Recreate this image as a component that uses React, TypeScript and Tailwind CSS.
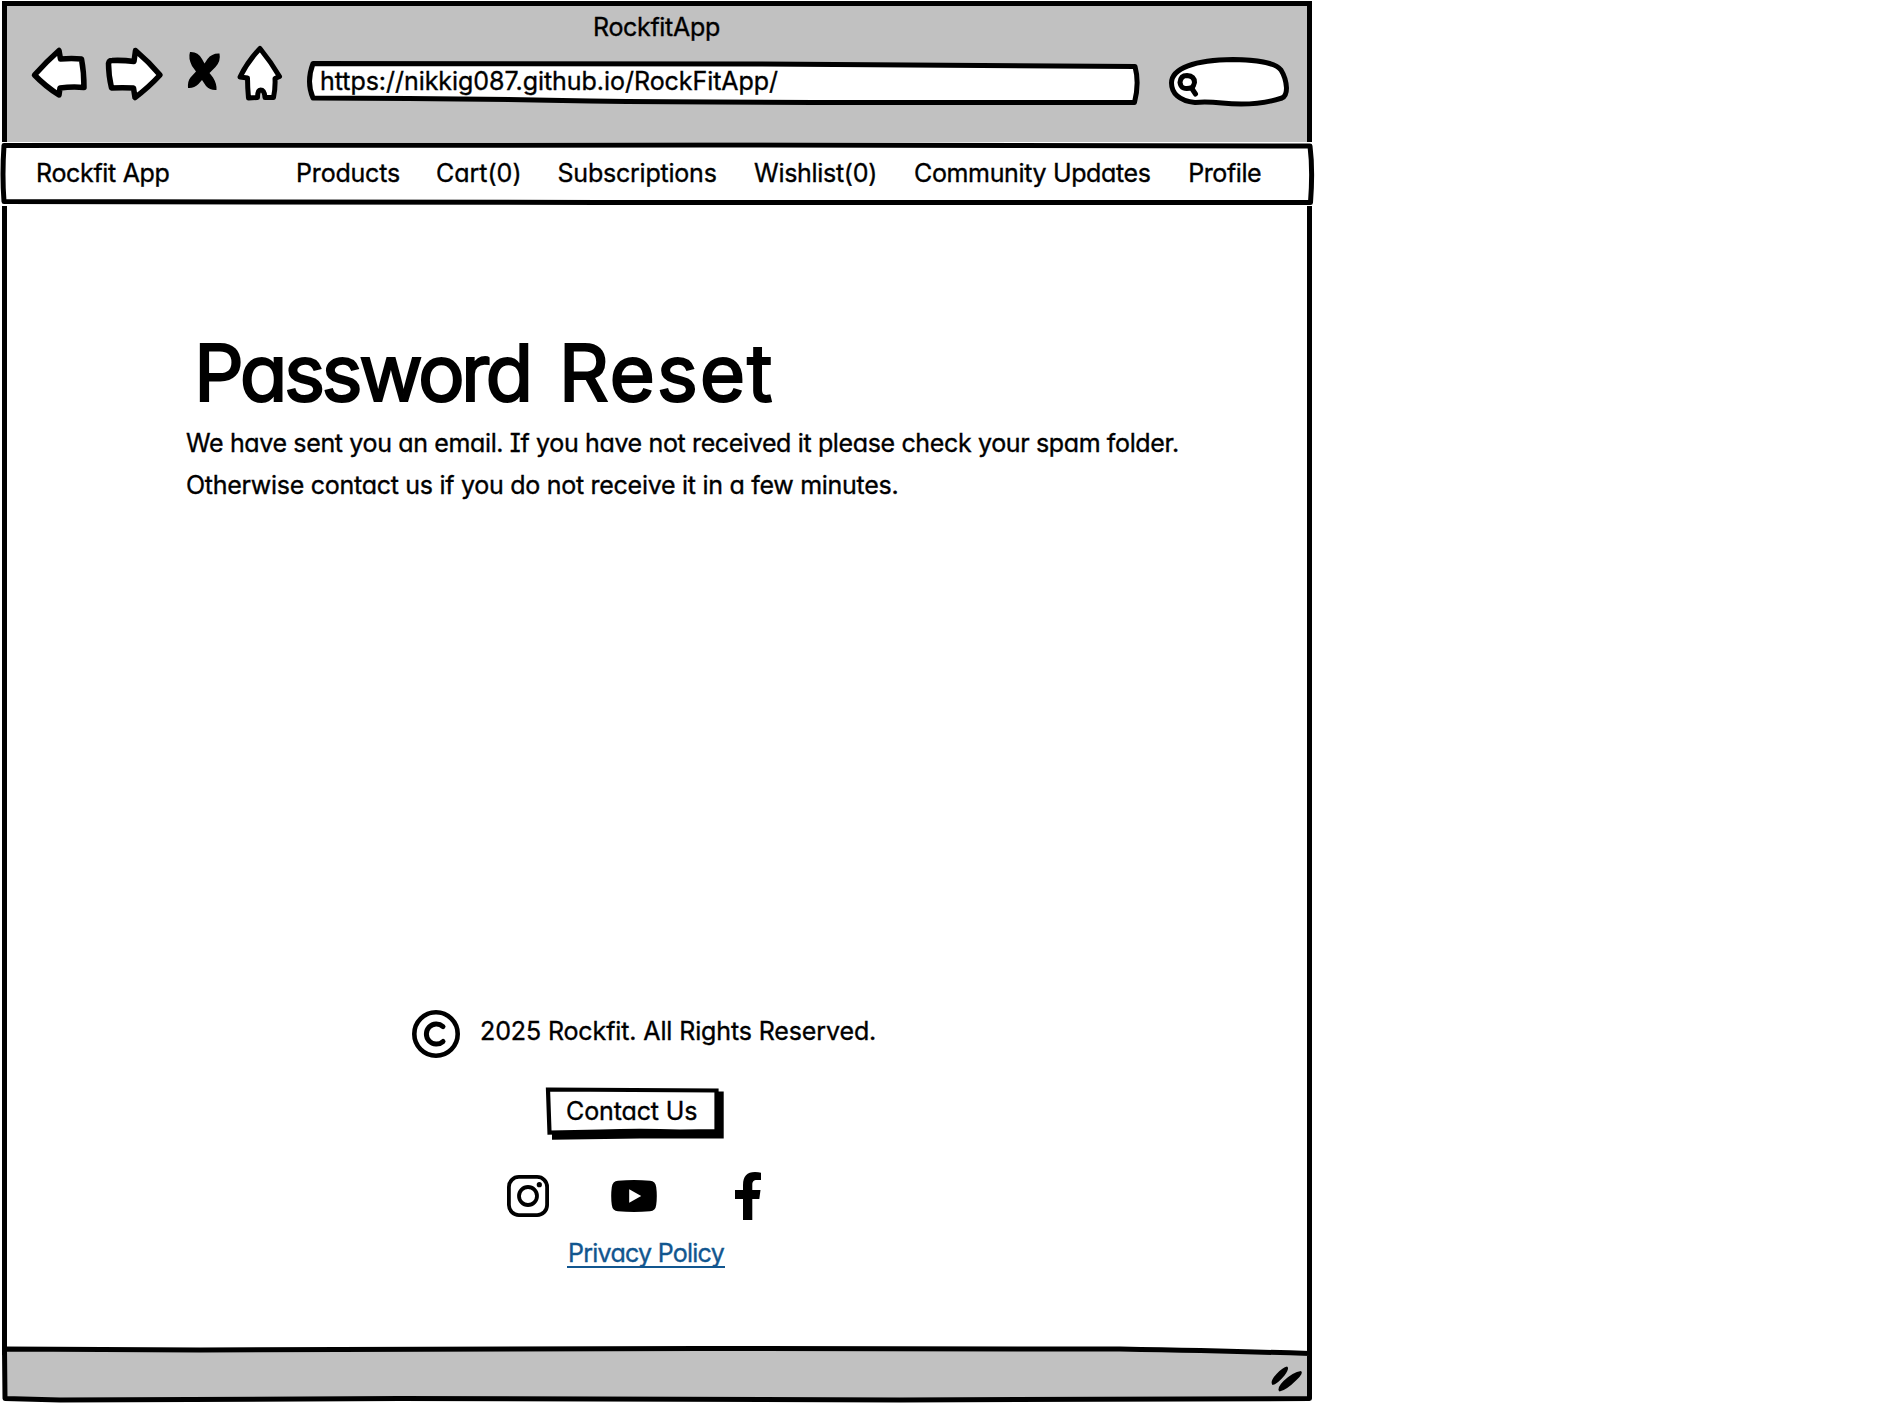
const ink = {
  fill: "none",
  stroke: "#000",
  strokeWidth: 5,
  strokeLinejoin: "round" as const,
  strokeLinecap: "round" as const,
};

const overlay = "pointer-events-none absolute left-0 top-0 overflow-visible";

function BackIcon() {
  return (
    <svg width="60" height="60" viewBox="28 44 60 60" className="block">
      <path d="M34.500 75Q46 62 59 50.500L60.500 59Q72 58 81.500 59Q84 72 84 87.500Q72 86.500 60 88L59 95Q45 86 34.500 75Z" {...ink} strokeWidth={5.500} fill="#fff" />
    </svg>
  );
}

function ForwardIcon() {
  return (
    <svg width="62" height="60" viewBox="102 44 62 60" className="block">
      <path d="M112 60.500Q123 60 134 61.500L135.500 50.500Q149 62 160 75Q148 88 135 97.500L133.500 88Q122 87.500 111.500 88Q108.500 75 108.500 63.500Q109 60.500 112 60.500Z" {...ink} strokeWidth={5.500} fill="#fff" />
    </svg>
  );
}

function StopIcon() {
  return (
    <svg width="36" height="44" viewBox="186 50 36 44" className="block">
      <path d="M190 52Q198 51.500 202 59L204.500 63.500L207.500 59Q212 53 219.500 53.500Q221 61 215.500 67L209.500 73L213 77.500Q217 84 216.500 90Q210 90.500 206 86L202 80L198.500 84Q194 88.500 188 88Q187.500 81 190.500 77.500L196 71.500L192 66Q188 58 190 52Z" />
    </svg>
  );
}

function HomeIcon() {
  return (
    <svg width="50" height="60" viewBox="235 44 50 60" className="block">
      <path d="M260 48.500Q271 62 279.500 76.500L275 78.500Q275.500 88 273.500 97.500L265 97.500Q264.500 90 260.500 90Q257.500 90 257.500 97.500L248.500 98Q247.500 87 247.500 78L240 77Q248 61 260 48.500Z" {...ink} fill="#fff" />
    </svg>
  );
}

function CopyrightIcon() {
  return (
    <svg width="48" height="48" viewBox="0 0 48 48" className="block">
      <circle cx="24" cy="24" r="21.700" {...ink} strokeWidth={4.600} />
      <path d="M31 16.500A10 10 0 1 0 31 31.500" {...ink} />
    </svg>
  );
}

function InstagramIcon() {
  return (
    <svg width="42" height="42" viewBox="0 0 42 42" className="block">
      <rect x="1.900" y="1.900" width="38.200" height="38.200" rx="10" {...ink} strokeWidth={3.800} />
      <circle cx="21" cy="21" r="9" {...ink} strokeWidth={3.800} />
      <circle cx="32.300" cy="9.700" r="2.600" />
    </svg>
  );
}

function YoutubeIcon() {
  return (
    <svg width="46" height="32" viewBox="0 0 46 32" className="block">
      <path d="M7 .7Q23-.6 39 .7Q44.500 1.200 45.200 7Q46.400 16 45.200 25Q44.500 30.800 39 31.300Q23 32.600 7 31.300Q1.500 30.800 .8 25Q-.4 16 .8 7Q1.500 1.200 7 .7Z" />
      <path d="M18.200 9.200L30.200 16L18.200 22.800Z" fill="#fff" />
    </svg>
  );
}

function FacebookIcon() {
  return (
    <svg width="26" height="48" viewBox="0 0 26 48" className="block">
      <path d="M8 48V27H0V18H8V13C8 4 12 0 20 0Q23.500 0 26 .8V8H22C18.500 8 17.300 9.500 17.300 13V18H25.500L24.300 27H17.300V48Z" />
    </svg>
  );
}

function AddressBar() {
  return (
    <div className="relative ml-[22px] flex h-[48px] w-[832px] items-start">
      <svg className={overlay} width="832" height="48" viewBox="307 60 832 48">
        <path d="M313 63.500Q560 63 760 64L1135 66.500Q1139.500 83 1134.500 102.500Q760 103 590 101Q440 98 313 98Q306 82 313 63.500Z" {...ink} fill="#fff" />
      </svg>
      <span className="relative ml-[13px] mt-[6px] tracking-[-0.04px]">https://nikkig087.github.io/RockFitApp/</span>
    </div>
  );
}

function SearchBox() {
  return (
    <div className="relative ml-[30px] h-[52px] w-[120px]">
      <svg className={overlay} width="120" height="52" viewBox="1169 56 120 52">
        <path d="M1195 102.500C1179 101 1171.500 93 1171.500 83C1171.500 68 1195 60 1233 59.500C1256 60 1275 62 1281 70Q1286 78 1286.500 88Q1286.500 96 1282 98C1262 104.500 1240 105 1222 103Q1206 101.500 1195 102.500Z" {...ink} fill="#fff" />
        <path d="M1192.500 87.500Q1181 91 1180 82.500Q1180.500 75.500 1187 75.500Q1194.500 76 1194.500 82.500Q1194 86 1191.500 88L1195.500 94" {...ink} />
      </svg>
    </div>
  );
}

function BrowserHeader() {
  return (
    <header className="ml-[2px] mt-px h-[141px] w-[1310px] border-x-5 border-t-5 border-black bg-[#c1c1c1]">
      <div className="pl-[586px] pt-[6px] tracking-[-0.32px]">RockfitApp</div>
      <div className="-mt-[2px] flex items-start pl-[21px]">
        <div className="mt-[4px]">
          <BackIcon />
        </div>
        <div className="ml-[14px] mt-[4px]">
          <ForwardIcon />
        </div>
        <div className="ml-[22px] mt-[10px]">
          <StopIcon />
        </div>
        <div className="ml-[13px] mt-[4px]">
          <HomeIcon />
        </div>
        <div className="mt-[20px]">
          <AddressBar />
        </div>
        <div className="mt-[16px]">
          <SearchBox />
        </div>
      </div>
    </header>
  );
}

function NavBar() {
  return (
    <nav className="relative mt-px flex h-[62px] w-[1314px] items-start pl-[36px] pt-[15px]">
      <svg className={overlay} width="1314" height="62" viewBox="0 143 1314 62">
        <path d="M4 145.500L700 145L1310 146Q1313 170 1310.500 202.500L600 202.500L4 201.500Q2 175 4 145.500Z" {...ink} />
      </svg>
      <a className="tracking-[-0.32px]">Rockfit App</a>
      <a className="ml-[126.500px] tracking-[-0.2px]">Products</a>
      <a className="ml-[36px]">Cart(0)</a>
      <a className="ml-[36px] tracking-[-0.22px]">Subscriptions</a>
      <a className="ml-[37.500px] tracking-[-0.3px]">Wishlist(0)</a>
      <a className="ml-[37px] tracking-[-0.35px]">Community Updates</a>
      <a className="ml-[37.500px] tracking-[-0.4px]">Profile</a>
    </nav>
  );
}

function ContactButton() {
  return (
    <button className="relative flex h-[51px] w-[178px] items-start pl-[20px] pt-[8px]">
      <svg className={overlay} width="178" height="51" viewBox="546 1088 178 51">
        <path d="M552 1091.500L723.700 1091.500L723.700 1138.500L640 1138.600L552 1139.800Z" />
        <path d="M548 1089.500L716.500 1090.500L716.500 1131L680 1131.500Q640 1130 600 1131.500L549.500 1132.500Z" {...ink} strokeWidth={4.200} strokeLinejoin="miter" fill="#fff" />
      </svg>
      <span className="relative tracking-[-0.12px]">Contact Us</span>
    </button>
  );
}

function PageBody() {
  return (
    <main className="ml-[2px] mt-px h-[1149px] w-[1310px] border-x-5 border-black">
      <h1 className="pl-[187px] pt-[120px] text-[78px] leading-[94px] [-webkit-text-stroke:2px]">
        <span className="tracking-[-3.6px]">Password</span> <span className="ml-[7px] tracking-[1.8px]">Reset</span>
      </h1>
      <p className="pl-[179px] pt-[8px] tracking-[-0.36px]">
        We have sent you an email. If you have not received it please check your spam folder.
      </p>
      <p className="pl-[179px] pt-[12px] tracking-[-0.28px]">
        Otherwise contact us if you do not receive it in a few minutes.
      </p>
      <footer className="pt-[510px]">
        <div className="flex items-start pl-[405px]">
          <CopyrightIcon />
          <span className="ml-[20px] mt-[6px] tracking-[-0.12px]">2025 Rockfit. All Rights Reserved.</span>
        </div>
        <div className="pl-[539px] pt-[30px]">
          <ContactButton />
        </div>
        <div className="flex items-start pl-[500px] pt-[33px]">
          <div className="mt-[3px]">
            <InstagramIcon />
          </div>
          <div className="ml-[62px] mt-[8px]">
            <YoutubeIcon />
          </div>
          <div className="ml-[78px]">
            <FacebookIcon />
          </div>
        </div>
        <div className="flex pl-[560px] pt-[18px] text-[#11568f]">
          <a className="h-[30px] w-[158px] border-b-2 border-[#11568f] pl-px tracking-[-0.74px]">Privacy Policy</a>
        </div>
      </footer>
    </main>
  );
}

function StatusBar() {
  return (
    <div className="relative -mt-[9px] h-[57px] w-[1314px]">
      <svg className={overlay} width="1314" height="57" viewBox="0 1346 1314 57">
        <path d="M4.500 1349L200 1350L700 1348.500L1120 1349Q1230 1351 1309.500 1353.500L1309.500 1398.500L900 1400L400 1398.500L60 1400L5 1398.500Z" {...ink} fill="#c1c1c1" />
        <path d="M1287 1366.500Q1290 1368 1284.500 1375.500Q1277 1384.500 1272.500 1385Q1269.500 1381.500 1276.500 1374Q1283 1367 1287 1366.500Z" />
        <path d="M1301 1371Q1304 1373 1296.500 1380Q1286 1390.500 1279.500 1391.500Q1276 1388.500 1283.500 1381Q1293 1372 1301 1371Z" />
      </svg>
    </div>
  );
}

export default function App() {
  return (
    <div className="flex h-[1404px] flex-col items-start overflow-hidden whitespace-nowrap bg-white font-['Inter',sans-serif] text-[25px] leading-[30px] text-black [-webkit-text-stroke:0.35px] [font-feature-settings:'cv11','cv08']">
      <BrowserHeader />
      <NavBar />
      <PageBody />
      <StatusBar />
    </div>
  );
}
